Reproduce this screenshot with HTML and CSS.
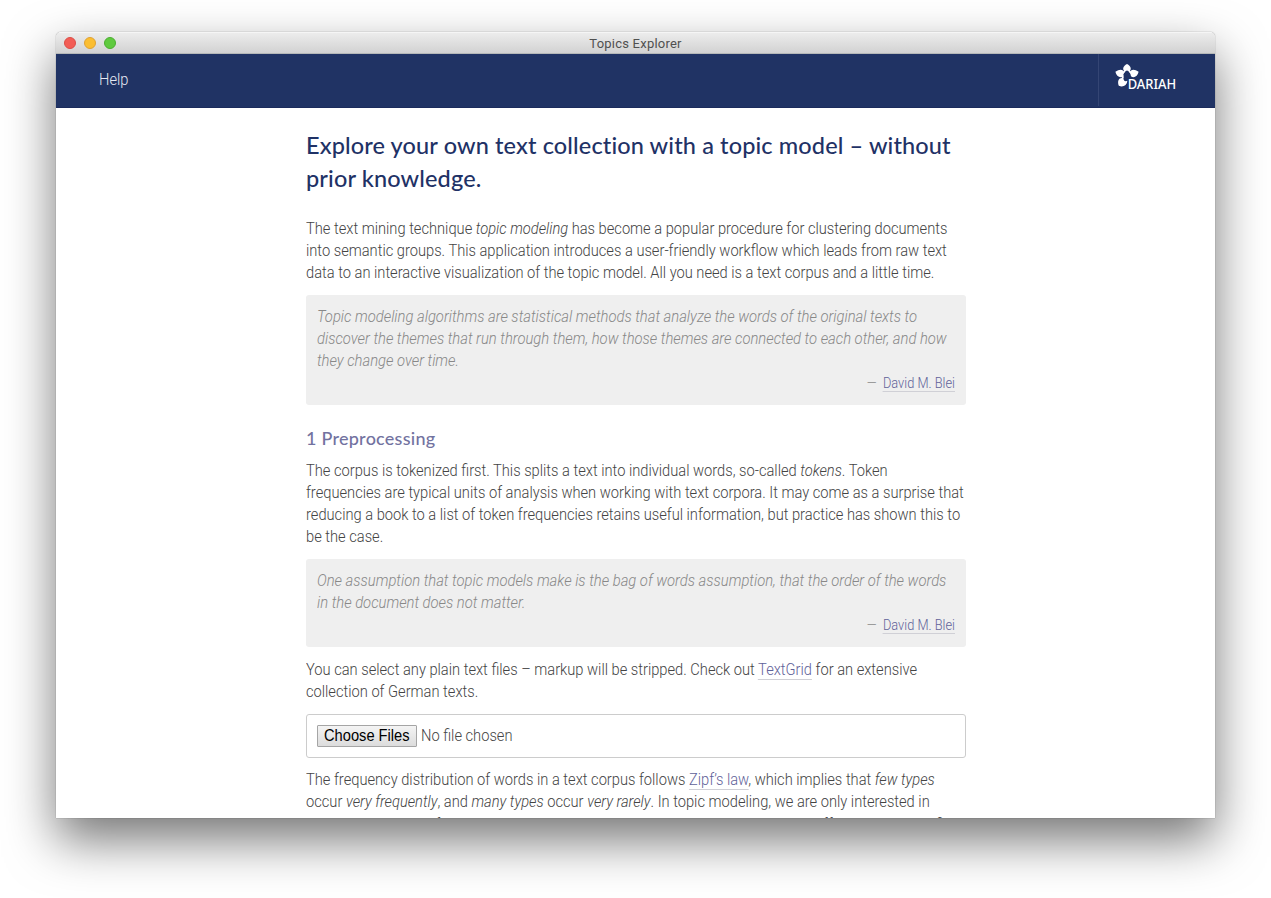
FILE: index.html
```
<!DOCTYPE html>
<html lang="en">
<head>
<meta charset="utf-8">
<title>Topics Explorer</title>
<link rel="stylesheet" href="styles.css">
</head>
<body>
<div class="window">
  <header class="titlebar">
    <div class="lights"><span class="light red"></span><span class="light yellow"></span><span class="light green"></span></div>
    <span class="title">Topics Explorer</span>
  </header>
  <nav class="nav">
    <a class="help">Help</a>
    <div class="brand">
      <svg class="logo" width="68" height="34" viewBox="0 0 68 34">
        <g fill="#fff">
          <path d="M9.800 8.500C7 6.500 8 3 12 1C16 3 17 6.500 14.200 8.500L12 7.600Z"/>
          <path d="M8 13.200C5.500 15.800 1.300 13.500 .4 8.800C4.600 5.400 8.800 6.200 8.900 9.800Z"/>
          <path d="M16 13.200C18.500 15.800 22.700 13.500 23.600 8.800C19.400 5.400 15.200 6.200 15.100 9.800Z"/>
          <path d="M8.600 15.500C4.500 13.800 1.800 17.600 3.800 22.800C8 24.600 12 22.500 12.300 17.800C10.300 18.800 8.400 17.800 8.600 15.500Z"/>
          <path d="M8 8.500L11 6.300L10 9.300L7.500 11.500ZM16 8.500L13 6.300L14 9.300L16.500 11.500ZM6.500 12L8.400 12L8.800 14.500L7 17Z"/>
        </g>
        <text class="logo-text" x="12.700" y="26" textLength="48.500" lengthAdjust="spacingAndGlyphs">DARIAH</text>
      </svg>
    </div>
  </nav>
  <main class="content">
    <h1>Explore your own text collection with a topic model – without<br>prior knowledge.</h1>
    <p>The text mining technique <em>topic modeling</em> has become a popular procedure for clustering documents<br>into semantic groups. This application introduces a user-friendly workflow which leads from raw text<br>data to an interactive visualization of the topic model. All you need is a text corpus and a little time.</p>
    <blockquote>
      <em class="quote">Topic modeling algorithms are statistical methods that analyze the words of the original texts to<br>discover the themes that run through them, how those themes are connected to each other, and how<br>they change over time.</em>
      <footer>—&nbsp; <a>David M. Blei</a></footer>
    </blockquote>
    <h2>1 Preprocessing</h2>
    <p>The corpus is tokenized first. This splits a text into individual words, so-called <em>tokens</em>. Token<br>frequencies are typical units of analysis when working with text corpora. It may come as a surprise that<br>reducing a book to a list of token frequencies retains useful information, but practice has shown this to<br>be the case.</p>
    <blockquote class="spaced">
      <em class="quote">One assumption that topic models make is the bag of words assumption, that the order of the words<br>in the document does not matter.</em>
      <footer>—&nbsp; <a>David M. Blei</a></footer>
    </blockquote>
    <p>You can select any plain text files – markup will be stripped. Check out <a>TextGrid</a> for an extensive<br>collection of German texts.</p>
    <div class="upload"><button class="choose" type="button"><span>Choose Files</span></button><span class="status">No file chosen</span></div>
    <p class="cont">The frequency distribution of words in a text corpus follows <a>Zipf’s law</a>, which implies that <em>few types</em><br>occur <em>very frequently</em>, and <em>many types</em> occur <em>very rarely</em>. In topic modeling, we are only interested in</p>
    <p>words in the middle frequency area, as the most common words usually do not offer the semantic field</p>
  </main>
</div>
</body>
</html>
```

FILE: styles.css
```
* { box-sizing: border-box; }
body {
  margin: 0;
  height: 898px;
  overflow: hidden;
  background: #fff;
  padding: 32px 56px 80px;
  font-family: Roboto, sans-serif;
}
.window {
  height: 786px;
  display: flex;
  flex-direction: column;
  overflow: hidden;
  background: #fff;
  border-radius: 5px 5px 0 0;
  box-shadow: 0 0 1px rgba(0,0,0,.65), 0 22px 50px rgba(0,0,0,.54);
}
.titlebar {
  flex: none;
  height: 22px;
  display: grid;
  grid-template-columns: 1fr auto 1fr;
  align-items: center;
  padding: 1px 8px 0;
  background: linear-gradient(#ececec, #d2d2d2);
  border-top: 1px solid #f5f5f5;
  border-bottom: 1px solid #b5b8b8;
}
.lights { display: flex; gap: 8px; padding-bottom: 1px; }
.light { width: 12px; height: 12px; border-radius: 50%; border: 1px solid; }
.red { background: #f25d55; border-color: #dc4d46; }
.yellow { background: #fbbe31; border-color: #dfa132; }
.green { background: #5fca3f; border-color: #4bae30; }
.title { font-size: 13px; line-height: 18px; letter-spacing: .22px; color: #505050; }
.nav {
  flex: none;
  height: 54px;
  display: flex;
  justify-content: space-between;
  background: #203364;
  border-bottom: 1px solid #1b2b5c;
}
.brand { width: 117px; height: 52px; padding: 9px 0 0 16px; border-left: 1px solid #344574; }
.logo { display: block; }
.logo-text { font: 500 13.500px "Noto Sans", sans-serif; fill: #fff; }
.content {
  flex: none;
  width: 660px;
  margin-left: 250px;
  padding-top: 21px;
  font-size: 16px;
  font-weight: 300;
  line-height: 22px;
  color: #444;
  white-space: nowrap;
}
h1 {
  margin: 0 0 23px;
  font: 500 23.500px/33px Lato, sans-serif;
  letter-spacing: .13px;
  color: #1f3266;
}
h2 { margin: 22px 0 11px; font: 500 18px/22px Lato, sans-serif; letter-spacing: .25px; color: #7272a0; }
/* Body copy is set slightly condensed */
p, .quote, .help, .status, .choose span { transform: scaleX(.9165); transform-origin: 0 0; }
p { margin: 0 0 11px; }
p.cont { margin-bottom: 1px; }
a { color: #5f6299; border-bottom: 1px solid #d0d0d6; }
.help {
  margin-left: 43px;
  border-bottom: 0;
  font-size: 16px;
  font-weight: 300;
  line-height: 52px;
  color: #e6e9f2;
}
blockquote {
  margin: 0 0 11px;
  padding: 11px;
  background: #efefef;
  border-radius: 3px;
  color: #888;
}
.quote { display: block; transform: scaleX(.924); }
blockquote.spaced { margin-bottom: 12px; }
blockquote footer {
  font-size: 14px;
  text-align: right;
  transform: scaleX(.9165);
  transform-origin: 100% 0;
}
.upload {
  height: 44px;
  display: flex;
  align-items: center;
  gap: 4px;
  margin: 0 0 11px;
  padding: 0 10px;
  border: 1px solid #ccc;
  border-radius: 3px;
}
.choose {
  width: 100px;
  height: 22px;
  padding: 0 6px;
  font: 16px/18px "Liberation Sans", sans-serif;
  text-align: left;
  color: #000;
  background: linear-gradient(#f4f4f4, #dcdcdc);
  border: 1px solid #a5a5a5;
  border-radius: 1px;
}
.choose span { display: block; white-space: nowrap; }
```
